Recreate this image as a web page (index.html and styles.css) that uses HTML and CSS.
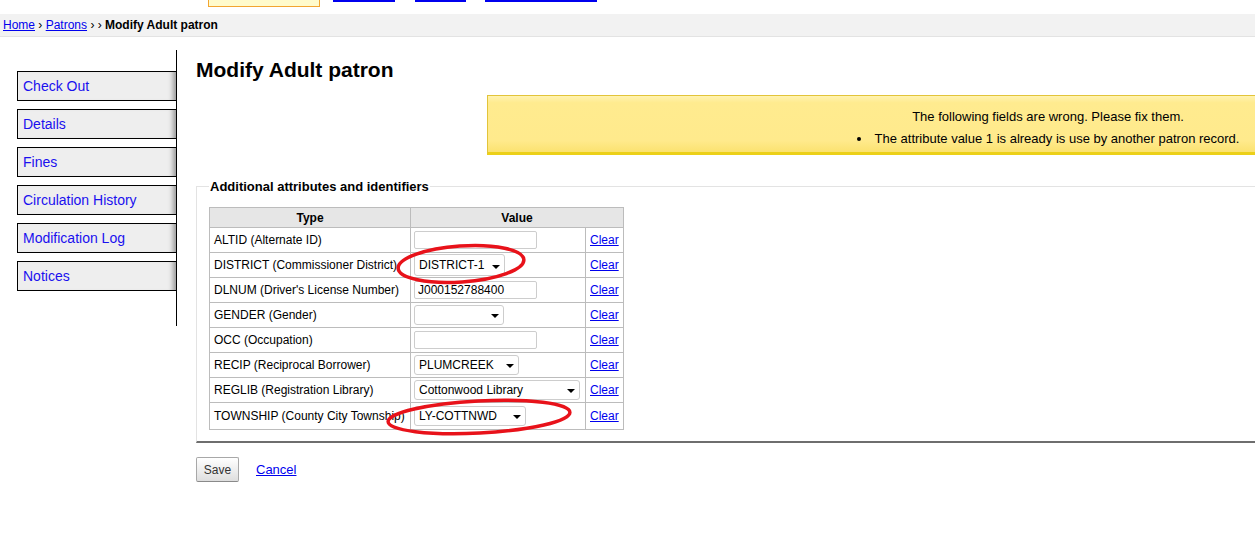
FILE: index.html
```html
<!DOCTYPE html>
<html lang="en">
<head>
    <meta charset="UTF-8">
    <title>Modify Adult patron</title>
    <link rel="stylesheet" href="styles.css">
</head>
<body>
    <!-- bottom edge of the header, scrolled off the top -->
    <div class="header-strip">
        <div class="header-search"></div>
        <span class="header-link link-1"></span>
        <span class="header-link link-2"></span>
        <span class="header-link link-3"></span>
    </div>

    <div id="breadcrumbs">
        <a href="#">Home</a> &rsaquo; <a href="#">Patrons</a> &rsaquo; &rsaquo; <strong>Modify Adult patron</strong>
    </div>

    <div class="main">
        <div class="sidebar">
            <ul class="patron-menu">
                <li><a href="#">Check Out</a></li>
                <li><a href="#">Details</a></li>
                <li><a href="#">Fines</a></li>
                <li><a href="#">Circulation History</a></li>
                <li><a href="#">Modification Log</a></li>
                <li><a href="#">Notices</a></li>
            </ul>
        </div>

        <div class="content">
            <h1>Modify Adult patron</h1>

            <div class="dialog alert">
                <p>The following fields are wrong. Please fix them.</p>
                <ul>
                    <li>The attribute value 1 is already is use by another patron record.</li>
                </ul>
            </div>

            <fieldset class="rows">
                <legend>Additional attributes and identifiers</legend>
                <table class="attributes">
                    <colgroup>
                        <col class="col-type">
                        <col class="col-value">
                        <col class="col-clear">
                    </colgroup>
                    <tr class="head">
                        <th>Type</th>
                        <th colspan="2">Value</th>
                    </tr>
                    <tr>
                        <td>ALTID (Alternate ID)</td>
                        <td><input type="text" class="attr-input" value=""></td>
                        <td><a href="#">Clear</a></td>
                    </tr>
                    <tr>
                        <td>DISTRICT (Commissioner District)</td>
                        <td><span class="select sel-district"><select><option>DISTRICT-1</option></select></span></td>
                        <td><a href="#">Clear</a></td>
                    </tr>
                    <tr>
                        <td>DLNUM (Driver's License Number)</td>
                        <td><input type="text" class="attr-input" value="J000152788400"></td>
                        <td><a href="#">Clear</a></td>
                    </tr>
                    <tr>
                        <td>GENDER (Gender)</td>
                        <td><span class="select sel-gender"><select><option></option></select></span></td>
                        <td><a href="#">Clear</a></td>
                    </tr>
                    <tr>
                        <td>OCC (Occupation)</td>
                        <td><input type="text" class="attr-input" value=""></td>
                        <td><a href="#">Clear</a></td>
                    </tr>
                    <tr>
                        <td>RECIP (Reciprocal Borrower)</td>
                        <td><span class="select sel-recip"><select><option>PLUMCREEK</option></select></span></td>
                        <td><a href="#">Clear</a></td>
                    </tr>
                    <tr>
                        <td>REGLIB (Registration Library)</td>
                        <td><span class="select sel-reglib"><select><option>Cottonwood Library</option></select></span></td>
                        <td><a href="#">Clear</a></td>
                    </tr>
                    <tr class="last">
                        <td>TOWNSHIP (County City Township)</td>
                        <td><span class="select sel-township"><select><option>LY-COTTNWD</option></select></span></td>
                        <td><a href="#">Clear</a></td>
                    </tr>
                </table>
            </fieldset>

            <div class="action">
                <button type="button">Save</button>
                <a href="#" class="cancel">Cancel</a>
            </div>
        </div>
    </div>

    <!-- red marks drawn over the screenshot -->
    <svg class="marks" width="1255" height="550" viewBox="0 0 1255 550">
        <ellipse cx="461" cy="264" rx="63" ry="18" transform="rotate(-4 461 264)" fill="none" stroke="#e8121a" stroke-width="3.5"/>
        <ellipse cx="479" cy="417" rx="91" ry="16" transform="rotate(-3 479 417)" fill="none" stroke="#e8121a" stroke-width="3.5"/>
    </svg>
</body>
</html>
```

FILE: styles.css
```css
html, body {
    margin: 0;
    overflow: hidden;
}
body {
    font-family: "Liberation Sans", Arial, sans-serif;
    font-size: 12px;
    color: #000;
    background: #fff;
    position: relative;
}
a {
    color: #0000ee;
}

/* header leftovers */
.header-strip {
    height: 14px;
    display: flex;
    align-items: flex-start;
}
.header-search {
    margin-left: 208px;
    width: 110px;
    height: 6px;
    background: #fffbcc;
    border: 1px solid #f2a531;
    border-top: none;
}
.header-link {
    height: 0;
    border-bottom: 2px solid #0000ee;
}
.link-1 { margin-left: 13px; width: 62px; }
.link-2 { margin-left: 20px; width: 51px; }
.link-3 { margin-left: 19px; width: 112px; }

#breadcrumbs {
    background: #f2f2f2;
    border-bottom: 1px solid #e3e3e3;
    height: 22px;
    line-height: 22px;
    padding-left: 3px;
}

.main {
    display: flex;
    align-items: flex-start;
}

/* left menu */
.sidebar {
    box-sizing: border-box;
    width: 177px;
    height: 276px;
    margin-top: 13px;
    padding: 21px 0 0 17px;
    border-right: 1px solid #000;
}
.patron-menu {
    list-style: none;
    margin: 0;
    padding: 0;
}
.patron-menu li {
    margin-bottom: 8px;
}
.patron-menu a {
    display: block;
    height: 28px;
    line-height: 29px;
    padding-left: 5px;
    border: 1px solid #000;
    border-right: none;
    background: #eee;
    box-shadow: inset -7px 0 5px -4px #9a9a9a;
    font-size: 14px;
    color: #1a10ee;
    text-decoration: none;
}

.content {
    flex: 1;
    min-width: 0;
    margin-left: 19px;
}
h1 {
    font-size: 21px;
    margin: 21px 0 0;
}

/* error box */
.alert {
    box-sizing: border-box;
    width: 1122px;
    height: 60px;
    margin: 13px 0 0 291px;
    padding-top: 13px;
    border: 1px solid #e2c43a;
    border-bottom: 3px solid #ecd018;
    background: linear-gradient(#fff3b0 0, #ffeb8f 12%, #ffea8c 80%, #fbe270 100%);
    text-align: center;
    font-size: 13px;
    line-height: 16px;
}
.alert p {
    margin: 0 0 6px;
}
.alert ul {
    margin: 0;
    padding: 0;
    list-style: disc inside;
}

/* attributes fieldset */
fieldset.rows {
    margin: 24px 0 0;
    padding: 13px 0 11px 12px;
    border: 1px solid #e3e3e3;
    border-right: none;
    border-bottom: 2px solid #6e6e6e;
    min-width: 0;
}
fieldset.rows legend {
    font-size: 13px;
    font-weight: bold;
    padding: 0 1px;
}

.attributes {
    border-collapse: collapse;
    table-layout: fixed;
    width: 414px;
    border: 1px solid #bcbcbc;
}
.col-type { width: 201px; }
.col-value { width: 175px; }
.col-clear { width: 38px; }
.attributes tr {
    height: 25px;
}
.attributes tr.head {
    height: 20px;
}
.attributes tr.last {
    height: 27px;
}
.attributes th {
    background: #e6e6e6;
    font-weight: bold;
    padding: 0 4px;
    border: 1px solid #bcbcbc;
}
.attributes td {
    padding: 0 4px 0 4px;
    border: 1px solid #bcbcbc;
    white-space: nowrap;
    vertical-align: middle;
}
.attributes td:nth-child(2) {
    padding-left: 3px;
}

.attr-input {
    box-sizing: border-box;
    width: 123px;
    height: 18px;
    margin: 0;
    padding: 0 3px;
    border: 1px solid #cdcdcd;
    border-radius: 2px;
    font-family: "Liberation Sans", Arial, sans-serif;
    font-size: 12px;
    vertical-align: middle;
}

.select {
    display: inline-block;
    position: relative;
    vertical-align: middle;
}
.select select {
    -webkit-appearance: none;
    appearance: none;
    box-sizing: border-box;
    height: 20px;
    margin: 0;
    padding: 0 16px 0 4px;
    border: 1px solid #cdcdcd;
    border-radius: 3px;
    background: #fff;
    font-family: "Liberation Sans", Arial, sans-serif;
    font-size: 12px;
    color: #000;
    display: block;
}
.select::after {
    content: "";
    position: absolute;
    right: 5px;
    top: 9px;
    border-left: 4px solid transparent;
    border-right: 4px solid transparent;
    border-top: 4px solid #000;
}
.sel-district select { width: 91px; height: 22px; }
.sel-district::after { top: 11px; }
.sel-gender select { width: 90px; }
.sel-recip select { width: 105px; }
.sel-reglib select { width: 166px; }
.sel-township select { width: 112px; }

/* buttons */
.action {
    margin-top: 14px;
    display: flex;
    align-items: center;
}
.action button {
    width: 43px;
    height: 25px;
    padding: 0;
    border: 1px solid #a8a8a8;
    border-bottom-color: #8a8a8a;
    border-radius: 2px;
    background: linear-gradient(#ffffff, #dedede);
    font-family: "Liberation Sans", Arial, sans-serif;
    font-size: 12px;
    color: #333;
}
.action .cancel {
    margin-left: 17px;
    font-size: 13px;
}

.marks {
    position: absolute;
    top: 0;
    left: 0;
    pointer-events: none;
}
```
